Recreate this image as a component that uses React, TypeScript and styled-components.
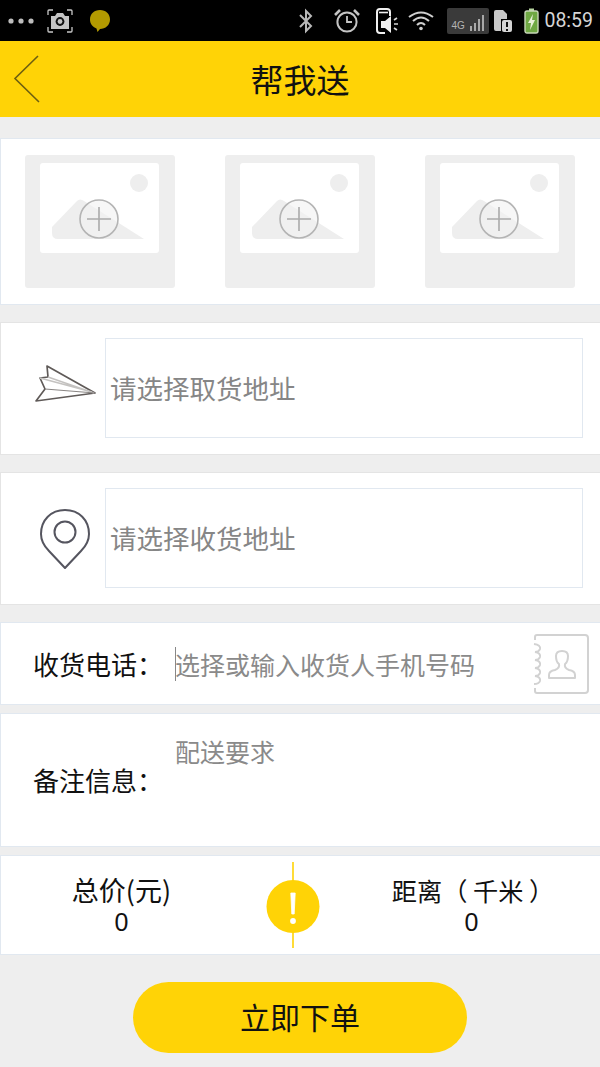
import styled, { createGlobalStyle } from 'styled-components';

const GlobalStyle = createGlobalStyle`
    html, body {
        margin: 0;
        padding: 0;
        background: #eeeeee;
    }
    * {
        box-sizing: border-box;
    }
`;

const FONT = `"Noto Sans CJK SC", "Noto Sans", sans-serif`;
const YELLOW = '#ffd306';
const BORDER = '#e1e8f0';

function PhotoPlaceholder() {
    return (
        <PhotoSlot>
            <svg width='150' height='133' viewBox='0 0 150 133'>
                <rect x='0' y='0' width='150' height='133' rx='3' fill='#eeeeee' />
                <rect x='15' y='8' width='119' height='90' rx='3' fill='#ffffff' />
                <circle cx='114' cy='28' r='9' fill='#eeeeee' />
                <path d='M27 72 L52 46 Q55 43 59 46 L119 84 L33 84 Q27 84 27 78 Z' fill='#eeeeee' />
                <circle cx='74' cy='64' r='19' fill='#f2f2f2' fillOpacity='0.6' stroke='#b4b4b4' strokeWidth='1.6' />
                <path d='M62 64 H86 M74 52 V76' stroke='#aaaaaa' strokeWidth='1.6' fill='none' />
            </svg>
        </PhotoSlot>
    );
}

export default function App() {
    return (
        <Page>
            <GlobalStyle />
            <StatusBar>
                <StatusGroup>
                    <svg width='26' height='6' viewBox='0 0 26 6'>
                        <circle cx='3' cy='3' r='2.6' fill='#bdbdbd' />
                        <circle cx='13' cy='3' r='2.6' fill='#bdbdbd' />
                        <circle cx='23' cy='3' r='2.6' fill='#bdbdbd' />
                    </svg>
                    <StatusIcon $gap={13} width='26' height='24' viewBox='0 0 26 24'>
                        <path d='M1 6 V2 Q1 1 2 1 H6 M20 1 H24 Q25 1 25 2 V6 M1 18 V22 Q1 23 2 23 H6 M20 23 H24 Q25 23 25 22 V18' stroke='#c8c8c8' strokeWidth='1.3' fill='none' />
                        <path d='M4 7 H8 L10 4 H16 L18 7 H22 V20 H4 Z' fill='#c4c4c4' />
                        <circle cx='13' cy='12.5' r='4.4' fill='#111111' />
                        <circle cx='13' cy='12.5' r='2.4' fill='#c4c4c4' />
                    </StatusIcon>
                    <StatusIcon $gap={16} width='22' height='24' viewBox='0 0 22 24'>
                        <path d='M11 1 C17 1 21 5 21 10.5 C21 16 16.5 20 11 20 L8.5 23 L7.5 19.5 C3.5 18 1 14.5 1 10.5 C1 5 5 1 11 1 Z' fill='#b39a00' />
                    </StatusIcon>
                </StatusGroup>
                <StatusGroup>
                    <svg width='16' height='26' viewBox='0 0 16 26'>
                        <path d='M2 7 L13 18 L8 23 V3 L13 8 L2 19' stroke='#b8b8b8' strokeWidth='2' fill='none' />
                    </svg>
                    <StatusIcon $gap={20} width='26' height='26' viewBox='0 0 26 26'>
                        <circle cx='13' cy='14' r='9.6' stroke='#c4c4c4' strokeWidth='2' fill='none' />
                        <path d='M13 8 V14 H18' stroke='#c4c4c4' strokeWidth='1.8' fill='none' />
                        <path d='M1 7 L6 2 M25 7 L20 2' stroke='#c4c4c4' strokeWidth='2.6' fill='none' />
                    </StatusIcon>
                    <StatusIcon $gap={16} width='24' height='26' viewBox='0 0 24 26'>
                        <path d='M9 25 H4 Q1 25 1 22 V4 Q1 1 4 1 H11 Q14 1 14 4 V8' fill='none' stroke='#f0f0f0' strokeWidth='2' />
                        <path d='M3 4.5 H12' stroke='#f0f0f0' strokeWidth='1.6' />
                        <path d='M5 13 H9 L15 8 V25 L9 20 H5 Z' fill='#f0f0f0' />
                        <path d='M18 12 L21 10 M18 16 H22 M18 20 L21 22' stroke='#d8d8d8' strokeWidth='1.7' />
                    </StatusIcon>
                    <StatusIcon $gap={8} width='26' height='20' viewBox='0 0 26 20'>
                        <path d='M1 6 Q13 -3 25 6 M5 10 Q13 3 21 10 M9 14 Q13 10 17 14' stroke='#d0d0d0' strokeWidth='2' fill='none' />
                        <circle cx='13' cy='17.5' r='1.8' fill='#d0d0d0' />
                    </StatusIcon>
                    <NetworkBadge>
                        <NetworkLabel>4G</NetworkLabel>
                        <svg width='16' height='18' viewBox='0 0 16 18'>
                            <path d='M1 18 V13 M5 18 V10 M9 18 V6 M13 18 V2' stroke='#a8a8a8' strokeWidth='2' />
                        </svg>
                    </NetworkBadge>
                    <StatusIcon $gap={4} width='19' height='24' viewBox='0 0 19 24'>
                        <path d='M1 3 Q1 1 3 1 H10 L14 5 V10 H8 V22 H3 Q1 22 1 20 Z' fill='#c8c8c8' />
                        <rect x='9' y='11' width='10' height='12' rx='2' fill='#d4d4d4' />
                        <path d='M14 13 V18 M14 20 V22' stroke='#111111' strokeWidth='2' />
                    </StatusIcon>
                    <StatusIcon $gap={12} width='15' height='26' viewBox='0 0 15 26'>
                        <rect x='5' y='0.5' width='5' height='3' fill='#b8d6a0' />
                        <rect x='1' y='3' width='13' height='22' rx='2' fill='#6fa843' stroke='#c8d8b8' strokeWidth='1.4' />
                        <path d='M9 6 L4 15 H7 L6 22 L11 12 H8 Z' fill='#e8f0d8' />
                    </StatusIcon>
                    <Clock>08:59</Clock>
                </StatusGroup>
            </StatusBar>

            <Header>
                <BackButton>
                    <svg width='28' height='48' viewBox='0 0 28 48'>
                        <path d='M25 1 L2 23.5 L26 47' stroke='#6d5f10' strokeWidth='1.6' fill='none' />
                    </svg>
                </BackButton>
                <Title>帮我送</Title>
            </Header>

            <PhotoCard>
                <PhotoPlaceholder />
                <PhotoPlaceholder />
                <PhotoPlaceholder />
            </PhotoCard>

            <AddressCard>
                <AddressIcon>
                    <PlaneGlyph width='64' height='40' viewBox='0 0 64 40'>
                        <path d='M13 2 L61 29 L2 37 L11 25 L6 14 L14 13 Z' stroke='#5f5a58' strokeWidth='1.7' fill='none' strokeLinejoin='round' />
                        <path d='M6 14 L58 28 M14 13 L60 29' stroke='#c4c2c0' strokeWidth='1.4' fill='none' />
                        <path d='M11 25 L61 29' stroke='#8a8684' strokeWidth='1.2' fill='none' />
                    </PlaneGlyph>
                </AddressIcon>
                <AddressField>请选择取货地址</AddressField>
            </AddressCard>

            <AddressCard>
                <AddressIcon>
                    <PinGlyph width='50' height='60' viewBox='0 0 50 60'>
                        <path d='M25 59 L9 42 C3 36 1 31 1 25 C1 11 11 1 25 1 C39 1 49 11 49 25 C49 31 47 36 41 42 Z' stroke='#55555f' strokeWidth='2' fill='none' strokeLinejoin='round' />
                        <circle cx='25' cy='23' r='10.5' stroke='#55555f' strokeWidth='2' fill='none' />
                    </PinGlyph>
                </AddressIcon>
                <AddressField>请选择收货地址</AddressField>
            </AddressCard>

            <PhoneRow>
                <RowLabel>收货电话：</RowLabel>
                <PhoneHint>选择或输入收货人手机号码</PhoneHint>
                <ContactIcon>
                    <svg width='56' height='60' viewBox='0 0 56 60'>
                        <path d='M2 6 V3 Q2 1 4 1 H52 Q55 1 55 4 V56 Q55 59 52 59 H4 Q2 59 2 57 V54' stroke='#d2d2d2' strokeWidth='2' fill='none' />
                        <path d='M1 10 Q8 11 7 15 Q6 18 2 18 Q8 19 7 23 Q6 26 2 26 Q8 27 7 31 Q6 34 2 34 Q8 35 7 39 Q6 42 2 42 Q8 43 7 47 Q6 50 1 50' stroke='#d2d2d2' strokeWidth='2' fill='none' />
                        <path d='M16 44 V41 Q16 37 22 36 Q27 34 26 30 Q23 28 23 22 Q23 17 29 17 Q35 17 35 22 Q35 28 32 30 Q31 34 36 36 Q42 37 42 41 V44 Z' stroke='#d2d2d2' strokeWidth='2' fill='none' strokeLinejoin='round' />
                    </svg>
                </ContactIcon>
            </PhoneRow>

            <NotesRow>
                <NotesLabel>备注信息：</NotesLabel>
                <NotesHint>配送要求</NotesHint>
            </NotesRow>

            <SummaryRow>
                <SummaryCell>
                    <PriceName>总价(元)</PriceName>
                    <SummaryValue>0</SummaryValue>
                </SummaryCell>
                <SummaryMark>
                    <svg width='54' height='88' viewBox='0 0 54 88'>
                        <path d='M27 1 V87' stroke={YELLOW} strokeWidth='1.6' />
                        <circle cx='27' cy='45.5' r='26.5' fill={YELLOW} />
                        <path d='M24.8 32 H29.2 L28.2 53 H25.8 Z' fill='#ffffff' stroke='#ffffff' strokeWidth='0.8' strokeLinejoin='round' />
                        <circle cx='27' cy='60' r='2.9' fill='#ffffff' />
                    </svg>
                </SummaryMark>
                <SummaryCell>
                    <DistanceName>距离（ 千米 ）</DistanceName>
                    <SummaryValue>0</SummaryValue>
                </SummaryCell>
            </SummaryRow>

            <ButtonArea>
                <OrderButton>立即下单</OrderButton>
            </ButtonArea>
        </Page>
    );
}

const Page = styled.div`
    width: 600px;
    height: 1067px;
    overflow: hidden;
    display: flex;
    flex-direction: column;
    background: #eeeeee;
    font-family: ${FONT};
`;

const StatusBar = styled.div`
    height: 41px;
    flex-shrink: 0;
    background: #000000;
    display: flex;
    align-items: center;
    justify-content: space-between;
    padding: 0 7px 0 8px;
`;

const StatusGroup = styled.div`
    display: flex;
    align-items: center;
`;

const StatusIcon = styled.svg<{ $gap: number }>`
    margin-left: ${(p) => p.$gap}px;
`;

const NetworkBadge = styled.div`
    width: 42px;
    height: 26px;
    margin-left: 13px;
    padding: 4px 3px 3px 4px;
    border-radius: 2px;
    background: #3a3a3a;
    display: flex;
    align-items: flex-end;
    justify-content: space-between;
`;

const NetworkLabel = styled.span`
    color: #b4b4b4;
    font-family: "Liberation Sans", sans-serif;
    font-size: 10px;
    line-height: 11px;
`;

const Clock = styled.span`
    margin-left: 5px;
    color: #d6d6d6;
    font-family: Roboto, sans-serif;
    font-size: 19.5px;
    line-height: 24px;
`;

const Header = styled.div`
    position: relative;
    height: 76px;
    flex-shrink: 0;
    background: ${YELLOW};
    display: flex;
    align-items: center;
    justify-content: center;
`;

const BackButton = styled.div`
    position: absolute;
    left: 13px;
    top: 14px;
    line-height: 0;
`;

const Title = styled.h1`
    margin: 0;
    color: #111111;
    font-size: 33px;
    font-weight: 400;
    line-height: 48px;
`;

const Card = styled.div`
    background: #ffffff;
    border: 1px solid ${BORDER};
    border-width: 1px 0 1px 1px;
`;

const PhotoCard = styled(Card)`
    height: 167px;
    margin-top: 21px;
    padding: 16px 25px 0 24px;
    display: flex;
    justify-content: space-between;
    align-items: flex-start;
`;

const PhotoSlot = styled.div`
    width: 150px;
    height: 133px;
    line-height: 0;
`;

const AddressCard = styled(Card)`
    height: 133px;
    margin-top: 17px;
    padding: 15px 17px 17px 0;
    display: flex;
    align-items: center;
    border-color: #e4e4e4;
`;

const AddressIcon = styled.div`
    width: 104px;
    padding-left: 23px;
    display: flex;
    justify-content: center;
    line-height: 0;
`;

const PlaneGlyph = styled.svg`
    margin: 0 0 8px 3px;
`;

const PinGlyph = styled.svg`
    margin-top: 3px;
`;

const AddressField = styled.div`
    flex: 1;
    height: 100px;
    padding-left: 4px;
    border: 1px solid ${BORDER};
    color: #868686;
    font-size: 26.5px;
    line-height: 98px;
`;

const PhoneRow = styled(Card)`
    height: 83px;
    margin-top: 17px;
    padding: 0 11px 0 32px;
    display: flex;
    align-items: center;
`;

const RowLabel = styled.span`
    width: 142px;
    flex-shrink: 0;
    color: #111111;
    font-size: 26px;
    line-height: 38px;
    white-space: nowrap;
`;

const PhoneHint = styled.span`
    flex: 1;
    border-left: 1px solid #888888;
    color: #8a8a8a;
    font-size: 25px;
    line-height: 34px;
    text-indent: -1px;
    white-space: nowrap;
`;

const ContactIcon = styled.div`
    line-height: 0;
`;

const NotesRow = styled(Card)`
    height: 134px;
    margin-top: 8px;
    padding: 0 10px 0 32px;
    display: flex;
    align-items: flex-start;
`;

const NotesLabel = styled(RowLabel)`
    margin-top: 47px;
`;

const NotesHint = styled.span`
    margin-top: 19px;
    color: #8a8a8a;
    font-size: 25px;
    line-height: 36px;
`;

const SummaryRow = styled(Card)`
    height: 100px;
    margin-top: 8px;
    display: grid;
    grid-template-columns: 265px 54px 1fr;
    align-items: center;
`;

const SummaryCell = styled.div`
    display: flex;
    flex-direction: column;
    align-items: center;
    color: #111111;
    padding-bottom: 3px;
    padding-right: 24px;
    &:last-child {
        padding-right: 0;
        padding-left: 23px;
    }
`;

const SummaryName = styled.span`
    line-height: 36px;
    white-space: nowrap;
`;

const PriceName = styled(SummaryName)`
    font-size: 27px;
`;

const DistanceName = styled(SummaryName)`
    margin-right: -3px;
    font-size: 25.2px;
`;

const SummaryValue = styled.span`
    font-family: "Liberation Sans", sans-serif;
    font-size: 25px;
    line-height: 28px;
`;

const SummaryMark = styled.div`
    line-height: 0;
`;

const ButtonArea = styled.div`
    margin-top: 27px;
    display: flex;
    justify-content: center;
`;

const OrderButton = styled.button`
    width: 334px;
    height: 71px;
    padding: 0 0 2px;
    border: none;
    border-radius: 36px;
    background: ${YELLOW};
    color: #111111;
    font-family: ${FONT};
    font-size: 30px;
    line-height: 69px;
`;
